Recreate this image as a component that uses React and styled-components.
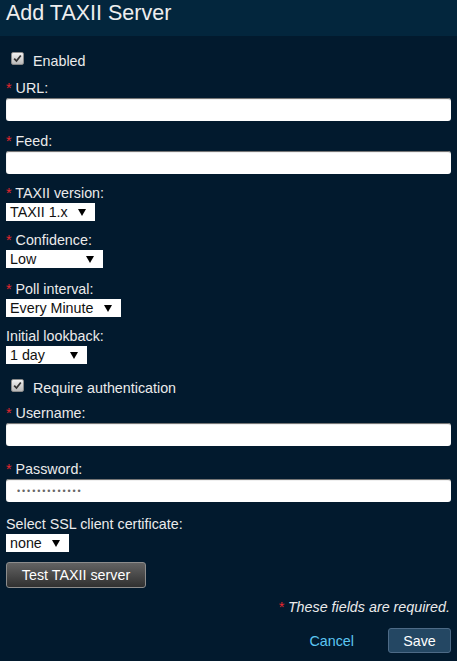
import React from "react";
import styled, { createGlobalStyle } from "styled-components";

const GlobalStyle = createGlobalStyle`
  html, body {
    margin: 0;
    padding: 0;
    background: #021a2e;
  }
  body {
    font-family: "Liberation Sans", Arial, sans-serif;
    font-size: 14.3px;
    color: #ebebeb;
  }
`;

const Page = styled.div`
  width: 457px;
  min-height: 661px;
  background: #021a2e;
`;

const Header = styled.div`
  height: 36px;
  box-sizing: border-box;
  padding-left: 6px;
  background: #03263d;
  h2 {
    margin: 0;
    font-size: 21.5px;
    font-weight: normal;
    line-height: 27px;
    color: #eeeeee;
  }
`;

const Form = styled.form`
  padding: 17px 6px 7px 6px;
`;

const CheckRow = styled.label`
  display: flex;
  align-items: flex-start;
  line-height: 16px;
  height: 16px;
  margin-top: ${(p) => p.$top || 0}px;
  span {
    margin-left: 9px;
  }
`;

const CheckBox = styled.i`
  box-sizing: border-box;
  width: 13px;
  height: 13px;
  margin: -1px 0 0 5px;
  border: 1px solid #8a8a8a;
  border-radius: 2px;
  background: linear-gradient(#f2f2f2, #b9b9b9);
  display: flex;
  align-items: center;
  justify-content: center;
`;

const Field = styled.div`
  margin-top: ${(p) => p.$top ?? 11}px;
`;

const Label = styled.div`
  line-height: 16px;
  margin-bottom: 2px;
`;

const Star = styled.span`
  color: #e8262d;
`;

const TextInput = styled.input`
  display: block;
  box-sizing: border-box;
  width: 100%;
  height: 23px;
  border: none;
  border-radius: 3px;
  background: #fff;
  box-shadow: inset 0 2px 1px -1px #666, inset 1px 0 1px -1px #999;
  padding: 0 8px;
  font-family: "Liberation Sans", Arial, sans-serif;
  font-size: 14px;
  outline: none;
`;

const DotsInput = styled(TextInput)`
  padding-left: 11px;
  font-size: 9px;
  letter-spacing: 1.9px;
  color: #666;
`;

const Select = styled.div`
  display: flex;
  align-items: center;
  justify-content: space-between;
  box-sizing: border-box;
  width: ${(p) => p.$w}px;
  height: 18px;
  margin-top: 1px;
  padding: 0 9px 0 4px;
  background: #fff;
  color: #111;
  line-height: 18px;
`;

const TestButton = styled.button`
  display: block;
  box-sizing: border-box;
  margin-top: 10px;
  height: 26px;
  width: 140px;
  border: 1px solid #8c8c8c;
  border-radius: 3px;
  background: linear-gradient(#636363, #303030);
  color: #fff;
  font-family: "Liberation Sans", Arial, sans-serif;
  font-size: 14.3px;
  padding: 0;
`;

const Required = styled.div`
  margin-top: 11px;
  text-align: right;
  line-height: 16px;
  font-style: italic;
  padding-right: 1px;
`;

const Footer = styled.div`
  margin-top: 13px;
  display: flex;
  justify-content: flex-end;
  align-items: center;
  gap: 34px;
`;

const LinkButton = styled.button`
  border: none;
  background: none;
  padding: 0;
  color: #5cc6f2;
  font-family: "Liberation Sans", Arial, sans-serif;
  font-size: 14.3px;
`;

const SaveButton = styled.button`
  box-sizing: border-box;
  width: 63px;
  height: 25px;
  border: 1px solid #4d6a86;
  border-radius: 3px;
  background: #244763;
  color: #fff;
  font-family: "Liberation Sans", Arial, sans-serif;
  font-size: 14.3px;
  padding: 0;
`;

const Check = () => (
  <CheckBox>
    <svg width="9" height="9" viewBox="0 0 9 9">
      <path d="M1.2 4.6 L3.5 7 L7.8 1.5" fill="none" stroke="#333" strokeWidth="1.8" />
    </svg>
  </CheckBox>
);

const Arrow = () => (
  <svg width="8" height="7" viewBox="0 0 8 7">
    <polygon points="0,0 8,0 4,7" fill="#000" />
  </svg>
);

const Req = ({ children }) => (
  <Label>
    <Star>*</Star> {children}
  </Label>
);

const Dropdown = ({ w, value }) => (
  <Select $w={w}>
    <span>{value}</span>
    <Arrow />
  </Select>
);

export default function App() {
  return (
    <Page>
      <GlobalStyle />
      <Header>
        <h2>Add TAXII Server</h2>
      </Header>
      <Form onSubmit={(e) => e.preventDefault()}>
        <CheckRow>
          <Check />
          <span>Enabled</span>
        </CheckRow>
        <Field>
          <Req>URL:</Req>
          <TextInput type="text" />
        </Field>
        <Field $top={12}>
          <Req>Feed:</Req>
          <TextInput type="text" />
        </Field>
        <Field>
          <Req>TAXII version:</Req>
          <Dropdown w={89} value="TAXII 1.x" />
        </Field>
        <Field>
          <Req>Confidence:</Req>
          <Dropdown w={97} value="Low" />
        </Field>
        <Field $top={13}>
          <Req>Poll interval:</Req>
          <Dropdown w={115} value="Every Minute" />
        </Field>
        <Field>
          <Label>Initial lookback:</Label>
          <Dropdown w={81} value="1 day" />
        </Field>
        <CheckRow $top={16}>
          <Check />
          <span>Require authentication</span>
        </CheckRow>
        <Field $top={9}>
          <Req>Username:</Req>
          <TextInput type="text" />
        </Field>
        <Field $top={15}>
          <Req>Password:</Req>
          <DotsInput type="text" defaultValue="•••••••••••••" />
        </Field>
        <Field $top={14}>
          <Label>Select SSL client certificate:</Label>
          <Dropdown w={63} value="none" />
        </Field>
        <TestButton type="button">Test TAXII server</TestButton>
        <Required>
          <Star>*</Star> These fields are required.
        </Required>
        <Footer>
          <LinkButton type="button">Cancel</LinkButton>
          <SaveButton type="submit">Save</SaveButton>
        </Footer>
      </Form>
    </Page>
  );
}
